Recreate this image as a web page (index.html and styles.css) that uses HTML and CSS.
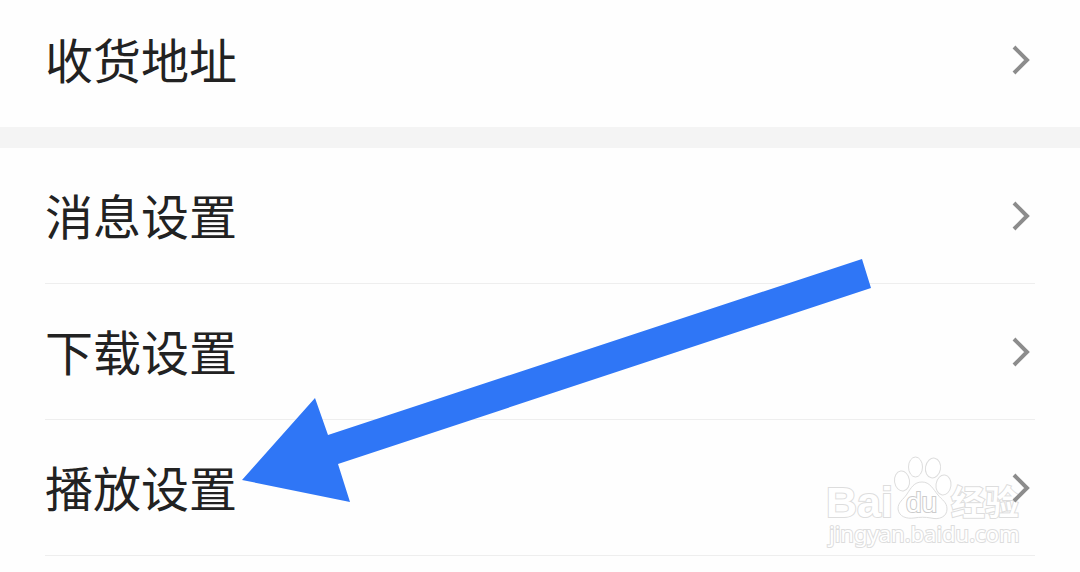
FILE: index.html
```html
<!DOCTYPE html>
<html lang="zh-CN">
<head>
<meta charset="utf-8">
<title>设置</title>
<link rel="stylesheet" href="styles.css">
</head>
<body>
<main class="settings">
  <section class="group group-first">
    <a class="row" href="#"><span class="label">收货地址</span><svg class="chevron" viewBox="0 0 20 32" aria-hidden="true"><path d="M3 3 16 16 3 29"/></svg></a>
  </section>
  <section class="group">
    <a class="row" href="#"><span class="label">消息设置</span><svg class="chevron" viewBox="0 0 20 32" aria-hidden="true"><path d="M3 3 16 16 3 29"/></svg></a>
    <a class="row" href="#"><span class="label">下载设置</span><svg class="chevron" viewBox="0 0 20 32" aria-hidden="true"><path d="M3 3 16 16 3 29"/></svg></a>
    <a class="row" href="#"><span class="label">播放设置</span><svg class="chevron" viewBox="0 0 20 32" aria-hidden="true"><path d="M3 3 16 16 3 29"/></svg></a>
  </section>
  <svg class="arrow" viewBox="0 0 629 244" aria-hidden="true"><path d="M0 221 73 139 86 176 620 0 629 29 96 205 108 243Z"/></svg>
  <svg class="watermark" viewBox="0 0 210 100" role="img" aria-label="Baidu 经验">
    <text class="mark-bai" x="6" y="65">Bai</text>
    <g class="paw">
      <ellipse cx="82" cy="29" rx="7.5" ry="10" transform="rotate(-8 82 29)"/>
      <ellipse cx="95.5" cy="15" rx="7" ry="10"/>
      <ellipse cx="113" cy="16" rx="7.5" ry="10" transform="rotate(10 113 16)"/>
      <ellipse cx="123.5" cy="33" rx="7.5" ry="10" transform="rotate(8 123.5 33)"/>
      <path d="M102 30C94 30 91 36 87 42C83 48 78 50 78 57C79 65 87 67 94 66C100 65 105 65 111 66C119 68 127 65 127 57C127 50 122 48 118 43C113 37 110 30 102 30Z"/>
    </g>
    <text class="mark-du" x="86" y="60">du</text>
    <text class="mark-cn" x="131" y="63">经验</text>
    <text class="mark-url" x="9" y="90">jingyan.baidu.com</text>
  </svg>
</main>
</body>
</html>
```
FILE: styles.css
```css
body {
  margin: 0;
  background: #fefefe;
  color: #222;
  font-family: "Noto Sans CJK SC", "Noto Sans", sans-serif;
}

.settings {
  position: relative;
  overflow: hidden;
  padding-bottom: 16px;
}

.group {
  padding: 0 45px;
}

.group-first {
  padding-bottom: 3px;
  border-bottom: 21px solid #f4f4f4;
}

.row {
  display: flex;
  align-items: center;
  justify-content: space-between;
  box-sizing: border-box;
  min-height: 136px;
  padding-right: 4px;
  border-bottom: 1px solid #eee;
  color: inherit;
  font-size: 48px;
  line-height: 72px;
  text-decoration: none;
}

.group-first .row {
  min-height: 124px;
  padding-bottom: 4px;
  border-bottom: 0;
}

.label {
  padding-bottom: 4px;
}

.chevron {
  position: relative;
  z-index: 1;
  width: 20px;
  height: 32px;
  fill: none;
  stroke: #8c8c8c;
  stroke-width: 4;
}

.arrow {
  position: absolute;
  top: 259px;
  left: 242px;
  width: 629px;
  height: 244px;
  fill: #2f76f6;
}

.watermark {
  position: absolute;
  top: 452px;
  right: 50px;
  width: 210px;
  height: 100px;
  fill: #fff;
  stroke: #ddd;
  stroke-width: 1;
  font-family: "Liberation Sans", "Noto Sans CJK SC", sans-serif;
}

.watermark text {
  paint-order: stroke;
  stroke-width: 2;
}

.mark-bai {
  font-size: 43px;
  font-weight: 700;
}

.watermark .mark-du {
  stroke: #ccc;
  font-size: 28px;
}

.mark-cn {
  font-family: "Noto Sans CJK SC", sans-serif;
  font-size: 34px;
  font-weight: 700;
}

.mark-url {
  font-family: "Noto Sans", sans-serif;
  font-size: 22px;
}
```
